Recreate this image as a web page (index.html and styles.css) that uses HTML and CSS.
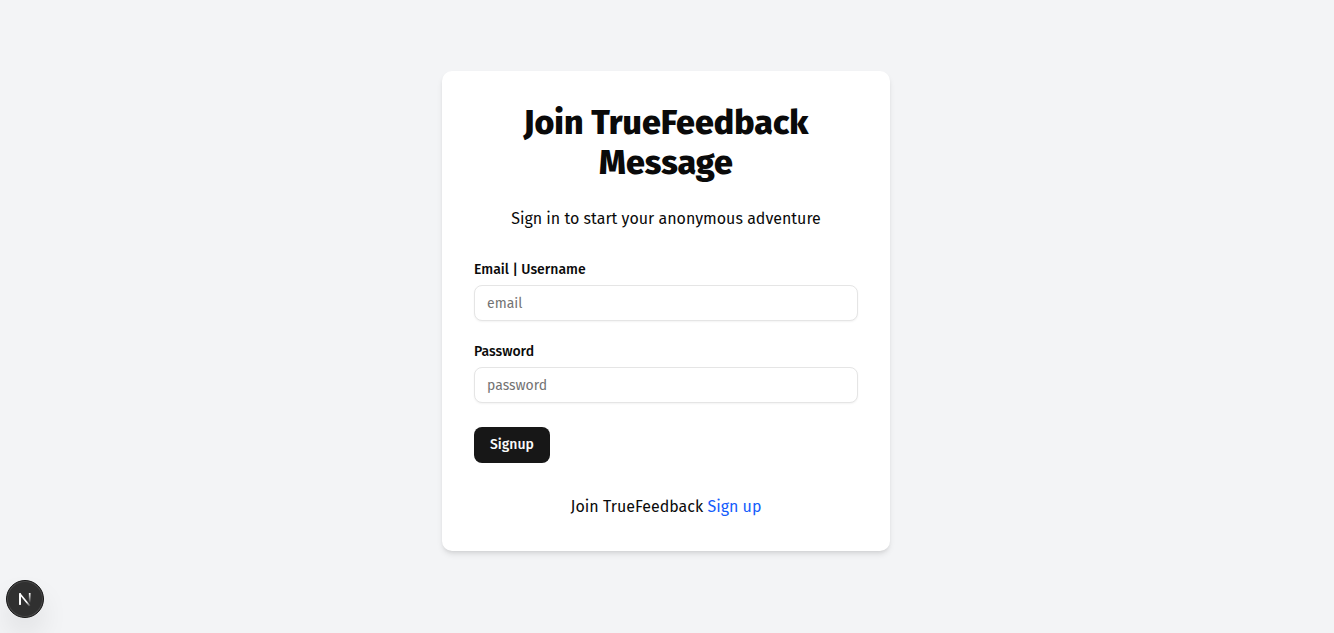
FILE: index.html
```html
<!DOCTYPE html>
<html lang="en">
<head>
<meta charset="utf-8">
<meta name="viewport" content="width=device-width, initial-scale=1">
<title>Join TrueFeedback Message</title>
<link rel="stylesheet" href="styles.css">
</head>
<body>
<main class="page">
  <section class="card">
    <header class="intro">
      <h1 class="title">Join TrueFeedback Message</h1>
      <p class="text">Sign in to start your anonymous adventure</p>
    </header>
    <form class="form">
      <div class="field">
        <label class="label" for="identifier">Email | Username</label>
        <input class="input" id="identifier" type="text" placeholder="email">
      </div>
      <div class="field">
        <label class="label" for="password">Password</label>
        <input class="input" id="password" type="password" placeholder="password">
      </div>
      <button class="button" type="submit">Signup</button>
    </form>
    <p class="text">Join TrueFeedback <a class="link" href="#signup">Sign up</a></p>
  </section>
</main>
<button class="devtools" type="button" aria-label="Open Next.js Dev Tools">
  <svg width="40" height="40" viewBox="0 0 40 40" fill="none" aria-hidden="true">
    <defs>
      <linearGradient id="diagonal" gradientUnits="userSpaceOnUse" x1="20" y1="19" x2="26" y2="27">
        <stop offset="0.4" stop-color="#fff"/>
        <stop offset="1" stop-color="#fff" stop-opacity="0"/>
      </linearGradient>
      <linearGradient id="stem" gradientUnits="userSpaceOnUse" x1="25" y1="14" x2="25" y2="24">
        <stop stop-color="#fff"/>
        <stop offset="1" stop-color="#fff" stop-opacity="0"/>
      </linearGradient>
    </defs>
    <path d="M15 25.8V15L24.8 27" stroke="url(#diagonal)" stroke-width="1.7" stroke-linejoin="bevel"/>
    <path d="M15 14V25.8" stroke="#fff" stroke-width="1.7"/>
    <path d="M24.7 14V24.5" stroke="url(#stem)" stroke-width="1.7"/>
  </svg>
</button>
</body>
</html>
```
FILE: styles.css
```css
* {
  box-sizing: border-box;
}

body {
  margin: 0;
  background: #f3f4f6;
  color: #0a0a0a;
  font-family: "Fira Sans", "Noto Sans", sans-serif;
}

.page {
  display: flex;
  align-items: center;
  justify-content: center;
  min-height: 100vh;
  padding: 0 2px 11px 0;
}

.card {
  display: flex;
  flex-direction: column;
  gap: 32px;
  width: 100%;
  max-width: 448px;
  padding: 32px;
  border-radius: 10px;
  background: #fff;
  box-shadow: 0 4px 6px -1px rgb(0 0 0 / 10%), 0 2px 4px -2px rgb(0 0 0 / 10%);
}

.intro {
  display: flex;
  flex-direction: column;
  gap: 24px;
  text-align: center;
}

.title {
  margin: 0;
  font-size: 34px;
  line-height: 40px;
  font-weight: 800;
}

.text {
  margin: 0;
  font-size: 16px;
  line-height: 24px;
  text-align: center;
}

.link {
  color: #155dfc;
  text-decoration: none;
}

.form {
  display: flex;
  flex-direction: column;
  align-items: flex-start;
  gap: 24px;
}

.field {
  display: flex;
  flex-direction: column;
  gap: 8px;
  width: 100%;
}

.label {
  font-size: 14px;
  line-height: 14px;
  font-weight: 500;
}

.input {
  width: 100%;
  height: 36px;
  padding: 4px 12px;
  border: 1px solid #e5e5e5;
  border-radius: 8px;
  background: #fff;
  box-shadow: 0 1px 2px rgb(0 0 0 / 5%);
  color: inherit;
  font: 14px/20px "Fira Sans", "Noto Sans", sans-serif;
}

.input::placeholder {
  color: #737373;
}

.button {
  height: 36px;
  padding: 8px 16px;
  border: 0;
  border-radius: 8px;
  background: #171717;
  color: #fafafa;
  font: 500 14px/20px "Fira Sans", "Noto Sans", sans-serif;
}

.devtools {
  position: fixed;
  left: 6px;
  bottom: 15px;
  display: flex;
  align-items: center;
  justify-content: center;
  width: 38px;
  height: 38px;
  padding: 0;
  border: 1px solid #171717;
  border-radius: 50%;
  background: #303030;
  box-shadow: inset 0 0 0 1px #4a4a4a, 0 16px 32px -8px rgb(0 0 0 / 24%);
}

.devtools svg {
  flex: none;
}
```
